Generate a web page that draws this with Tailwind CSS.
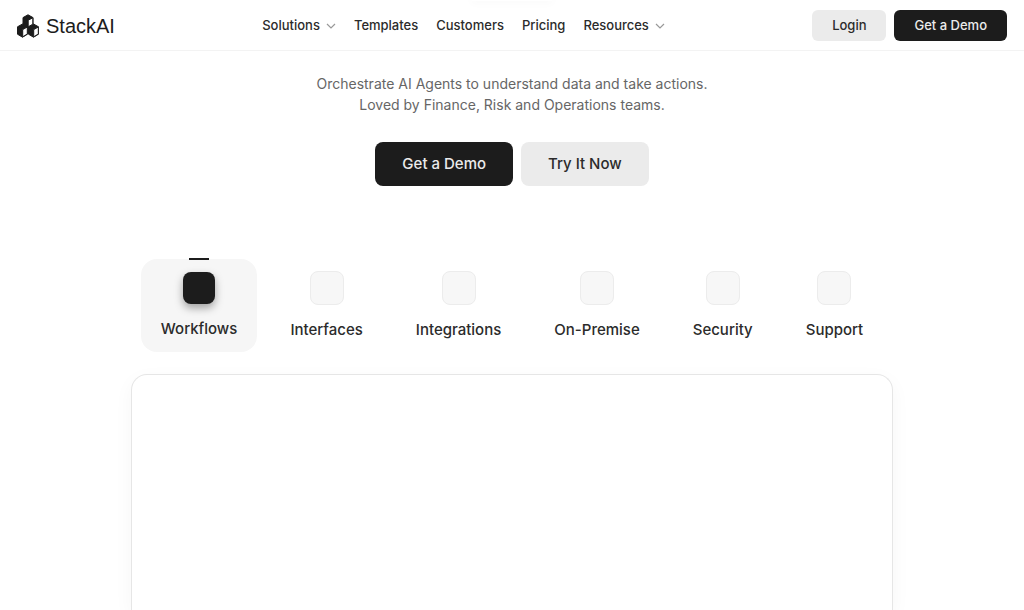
<!DOCTYPE html>
<html lang="en">
<head>
  <meta charset="UTF-8">
  <meta name="viewport" content="width=device-width, initial-scale=1.0">
  <title>StackAI</title>
  <script src="https://cdn.jsdelivr.net/npm/@tailwindcss/browser@4"></script>
</head>
<body class="flex flex-col h-screen overflow-hidden bg-white font-['Inter',sans-serif] text-[#2b2b2b]">
  <header class="relative flex items-center justify-between h-[51px] shrink-0 pt-px pl-4 pr-[17px] border-b border-[#f3f3f3]">
    <div class="absolute top-0 left-1/2 -translate-x-1/2 w-20 h-px shadow-[0_0_8px_1px_rgba(0,0,0,0.05)]"></div>
    <a href="#" class="flex items-center gap-1.5 text-xl font-['Liberation_Sans',sans-serif] text-[#1c1c1c]">
      <svg class="w-6 h-6" viewBox="0 0 24 24" stroke="#1c1c1c" stroke-width="1" stroke-linejoin="round" aria-hidden="true">
        <path fill="#1c1c1c" d="M6.500 10l5 2.800v7.400l-5 3-5-3v-7.400z"/>
        <path fill="#fff" d="M6.700 15.600l4.600-2.600v7l-4.600 2.800z"/>
        <path fill="#1c1c1c" d="M17.500 10l5 2.800v7.400l-5 3-5-3v-7.400z"/>
        <path fill="#fff" d="M17.700 15.600l4.600-2.600v7l-4.600 2.800z"/>
        <path fill="#1c1c1c" d="M12 .8l5 2.800v7l-5 2.800-5-2.800v-7z"/>
        <path fill="#fff" d="M12.200 6.200l4.600-2.400v6.400l-4.600 2.600z"/>
      </svg>
      <span>StackAI</span>
    </a>
    <nav class="flex items-center gap-[18px] text-[13px] font-medium">
      <a href="#" class="flex items-center gap-1.5">Solutions
        <svg class="w-2.5 h-2.5" viewBox="0 0 10 10" fill="none" stroke="#999" stroke-width="1.2" aria-hidden="true"><path d="M1 3l4 4 4-4"/></svg>
      </a>
      <a href="#">Templates</a>
      <a href="#">Customers</a>
      <a href="#">Pricing</a>
      <a href="#" class="flex items-center gap-1.5">Resources
        <svg class="w-2.5 h-2.5" viewBox="0 0 10 10" fill="none" stroke="#999" stroke-width="1.2" aria-hidden="true"><path d="M1 3l4 4 4-4"/></svg>
      </a>
    </nav>
    <div class="flex gap-2 text-[13px] font-medium">
      <button type="button" class="h-[31px] px-5 rounded-md bg-[#ebebeb]">Login</button>
      <button type="button" class="h-[31px] px-5 rounded-md bg-[#1c1c1c] text-[#ebebeb]">Get a Demo</button>
    </div>
  </header>

  <main class="flex flex-col items-center grow">
    <p class="mt-[22px] text-center text-sm leading-[21px] text-[#666]">
      Orchestrate AI Agents to understand data and take actions.<br>
      Loved by Finance, Risk and Operations teams.
    </p>

    <div class="flex gap-2 mt-[27px] text-[15px] font-medium">
      <button type="button" class="h-11 px-[27px] rounded-lg bg-[#1c1c1c] text-[#ebebeb]">Get a Demo</button>
      <button type="button" class="h-11 px-[27px] rounded-lg bg-[#ebebeb]">Try It Now</button>
    </div>

    <div class="flex gap-[13px] mt-[73px] text-[15px] leading-5 font-medium" role="tablist">
      <button type="button" role="tab" aria-selected="true" class="relative flex flex-col items-center gap-[15px] h-[93px] px-5 pt-[13px] rounded-2xl bg-[#f6f6f6]">
        <span class="absolute -top-px left-1/2 -translate-x-1/2 w-5 h-0.5 bg-[#1c1c1c]"></span>
        <span class="w-8 h-8 rounded-lg bg-[#1c1c1c] shadow-[0_4px_8px_rgba(0,0,0,0.35)]"></span>
        Workflows
      </button>
      <button type="button" role="tab" class="flex flex-col items-center gap-[15px] h-[93px] px-5 pt-3">
        <span class="w-[34px] h-[34px] rounded-lg bg-[#f7f7f7] border border-[#ececec]"></span>
        Interfaces
      </button>
      <button type="button" role="tab" class="flex flex-col items-center gap-[15px] h-[93px] px-5 pt-3">
        <span class="w-[34px] h-[34px] rounded-lg bg-[#f7f7f7] border border-[#ececec]"></span>
        Integrations
      </button>
      <button type="button" role="tab" class="flex flex-col items-center gap-[15px] h-[93px] px-5 pt-3">
        <span class="w-[34px] h-[34px] rounded-lg bg-[#f7f7f7] border border-[#ececec]"></span>
        On-Premise
      </button>
      <button type="button" role="tab" class="flex flex-col items-center gap-[15px] h-[93px] px-5 pt-3">
        <span class="w-[34px] h-[34px] rounded-lg bg-[#f7f7f7] border border-[#ececec]"></span>
        Security
      </button>
      <button type="button" role="tab" class="flex flex-col items-center gap-[15px] h-[93px] px-5 pt-3">
        <span class="w-[34px] h-[34px] rounded-lg bg-[#f7f7f7] border border-[#ececec]"></span>
        Support
      </button>
    </div>

    <section class="grow w-full max-w-[762px] mt-[22px] rounded-t-2xl border border-b-0 border-[#e6e6e6] bg-white shadow-[0_6px_20px_rgba(0,0,0,0.04)]" aria-label="Workflows"></section>
  </main>
</body>
</html>
